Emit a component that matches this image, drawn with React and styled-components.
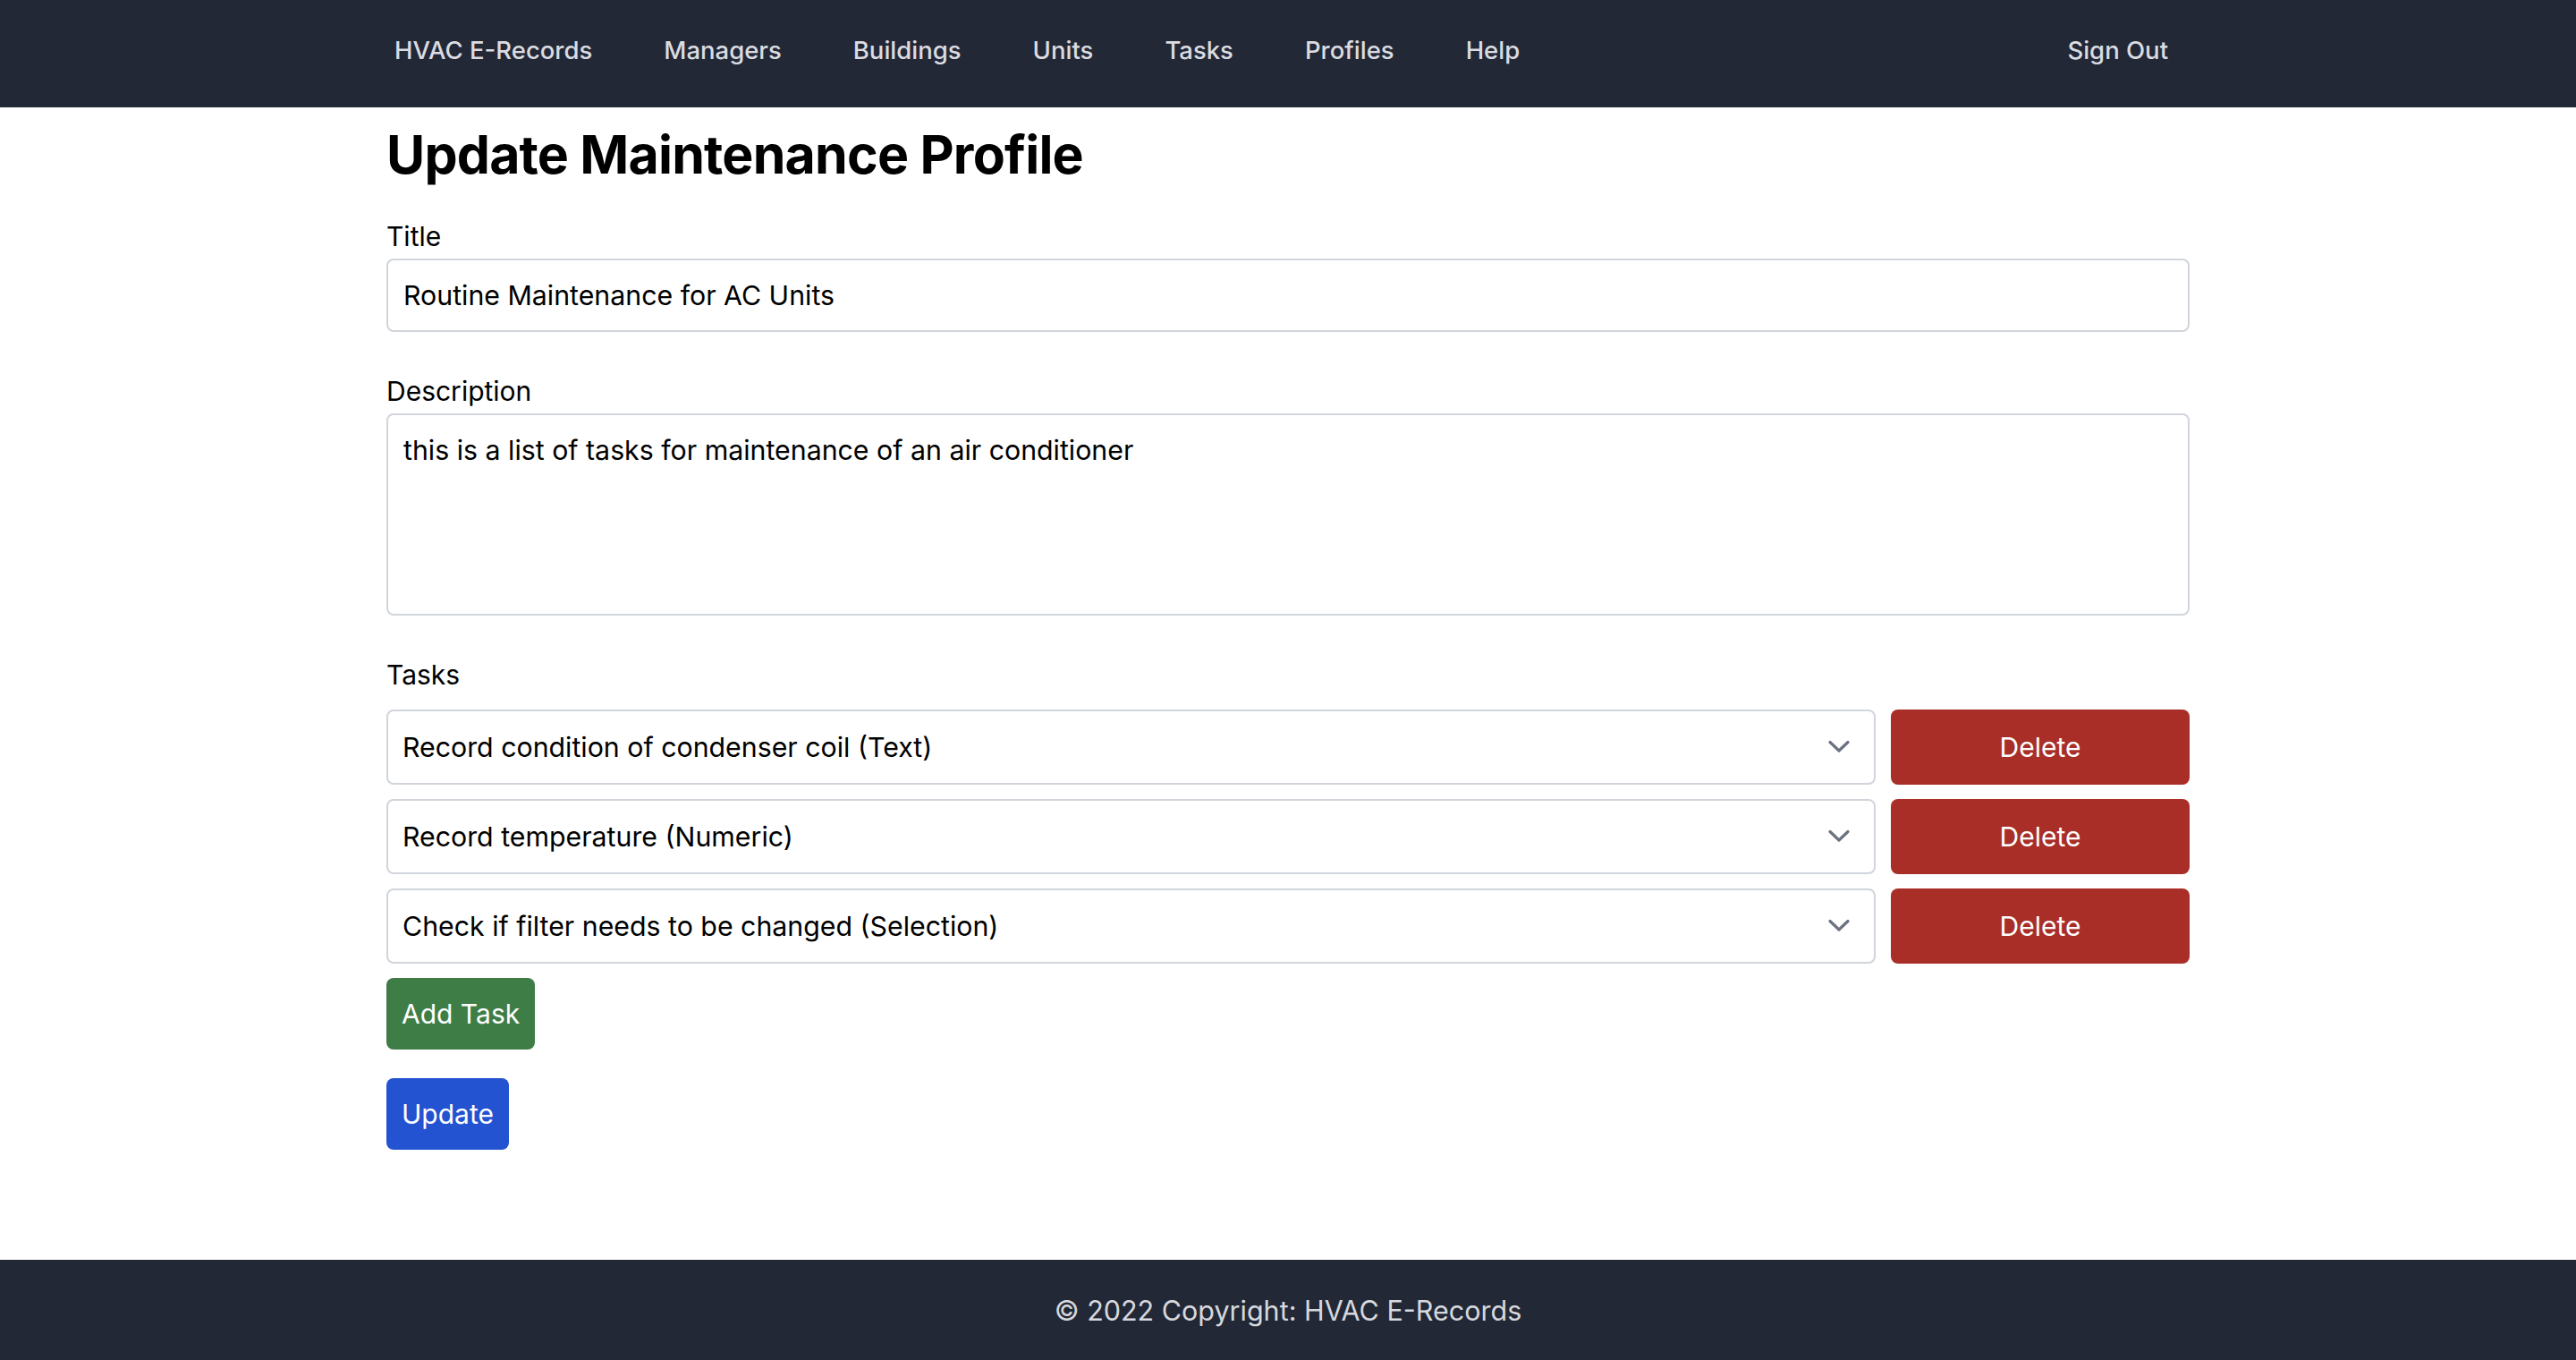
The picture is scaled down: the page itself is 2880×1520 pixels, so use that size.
import React from "react";
import styled, { createGlobalStyle } from "styled-components";

const GlobalStyle = createGlobalStyle`
  html, body {
    margin: 0;
    padding: 0;
    background: #ffffff;
    font-family: Inter, "Noto Sans", "Liberation Sans", sans-serif;
  }
  * {
    box-sizing: border-box;
  }
`;

const NAV_LINKS = ["HVAC E-Records", "Managers", "Buildings", "Units", "Tasks", "Profiles", "Help"];

const TASKS = [
  "Record condition of condenser coil (Text)",
  "Record temperature (Numeric)",
  "Check if filter needs to be changed (Selection)",
];

const Page = styled.div`
  min-height: 100vh;
  display: flex;
  flex-direction: column;
`;

// -----------------------------------------

const StyledNavBar = styled.nav`
  background: #222836;
  height: 120px;
  flex-shrink: 0;
`;

const NavInner = styled.div`
  width: 2016px;
  height: 100%;
  margin: 0 auto;
  padding: 0 24px 8px 9px;
  display: flex;
  align-items: center;
  justify-content: space-between;
`;

const NavGroup = styled.ul`
  display: flex;
  gap: 80px;
  margin: 0;
  padding: 0;
  list-style: none;
`;

const NavLink = styled.a`
  color: #dadce1;
  font-size: 27.5px;
  font-weight: 500;
  text-decoration: none;
  cursor: pointer;
`;

const NavBar = () => (
  <StyledNavBar>
    <NavInner>
      <NavGroup>
        {NAV_LINKS.map((text) => (
          <li key={text}>
            <NavLink>{text}</NavLink>
          </li>
        ))}
      </NavGroup>
      <NavLink>Sign Out</NavLink>
    </NavInner>
  </StyledNavBar>
);

// -----------------------------------------

const Main = styled.main`
  flex: 1;
`;

const Container = styled.div`
  width: 2016px;
  margin: 0 auto;
`;

const Heading = styled.h2`
  margin: 17px 0 33px;
  font-size: 59px;
  line-height: 72px;
  font-weight: 700;
  letter-spacing: -0.8px;
  color: #000;
`;

const Field = styled.div`
  margin-bottom: ${({ $gap = 44 }) => $gap}px;
`;

const Label = styled.label`
  display: block;
  font-size: 30px;
  line-height: 44px;
  color: #000;
  margin-bottom: ${({ $gap = 3 }) => $gap}px;
`;

const TextInput = styled.input`
  display: block;
  width: 100%;
  height: 82px;
  padding: 0 17px;
  border: 2px solid #d1d5db;
  border-radius: 8px;
  font-family: inherit;
  font-size: 30.3px;
  color: #000;
  background: #fff;
  outline: none;
`;

const TextArea = styled.textarea`
  display: block;
  width: 100%;
  height: 226px;
  padding: 17px 17px;
  border: 2px solid #d1d5db;
  border-radius: 8px;
  font-family: inherit;
  font-size: 30.3px;
  line-height: 44px;
  color: #000;
  resize: none;
  outline: none;
`;

const TaskRow = styled.div`
  display: flex;
  gap: 17px;
  margin-bottom: 16px;
`;

const SelectWrap = styled.div`
  position: relative;
  flex: 1;
`;

const Select = styled.select`
  appearance: none;
  display: block;
  width: 100%;
  height: 84px;
  padding: 0 70px 0 16px;
  border: 2px solid #d1d5db;
  border-radius: 8px;
  background: #fff;
  font-family: inherit;
  font-size: 30.3px;
  color: #000;
  outline: none;
`;

const Chevron = styled.svg`
  position: absolute;
  right: 29px;
  top: 50%;
  width: 24px;
  height: 15px;
  margin-top: -8px;
  pointer-events: none;
`;

const Button = styled.button`
  display: flex;
  align-items: center;
  justify-content: center;
  height: ${({ $height = 80 }) => $height}px;
  width: ${({ $width }) => ($width ? `${$width}px` : "auto")};
  padding: 0 17px;
  border: none;
  border-radius: 8px;
  background: ${({ $color }) => $color};
  color: #fff;
  font-family: inherit;
  font-size: 30px;
  cursor: pointer;
  margin-top: ${({ $top = 0 }) => $top}px;
`;

const TaskSelect = ({ value }) => (
  <SelectWrap>
    <Select defaultValue={value}>
      <option>{value}</option>
    </Select>
    <Chevron viewBox="0 0 24 15">
      <path d="M2 2.5 L12 12 L22 2.5" fill="none" stroke="#6b7280" strokeWidth="3.2" strokeLinecap="round" strokeLinejoin="round" />
    </Chevron>
  </SelectWrap>
);

// -----------------------------------------

const Footer = styled.footer`
  background: #222836;
  height: 112px;
  flex-shrink: 0;
  display: flex;
  align-items: center;
  justify-content: center;
  color: #d6d8dd;
  font-size: 30.5px;
`;

const App = () => {
  return (
    <Page>
      <GlobalStyle />
      <NavBar />
      <Main>
        <Container>
          <Heading>Update Maintenance Profile</Heading>
          <Field>
            <Label>Title</Label>
            <TextInput defaultValue="Routine Maintenance for AC Units" />
          </Field>
          <Field>
            <Label>Description</Label>
            <TextArea defaultValue="this is a list of tasks for maintenance of an air conditioner" />
          </Field>
          <Label $gap={17}>Tasks</Label>
          {TASKS.map((task) => (
            <TaskRow key={task}>
              <TaskSelect value={task} />
              <Button $color="#a92e28" $height={84} $width={334}>
                Delete
              </Button>
            </TaskRow>
          ))}
          <Button $color="#3e7d46">Add Task</Button>
          <Button $color="#2353d1" $top={32}>
            Update
          </Button>
        </Container>
      </Main>
      <Footer>© 2022 Copyright: HVAC E-Records</Footer>
    </Page>
  );
};

export default App;
